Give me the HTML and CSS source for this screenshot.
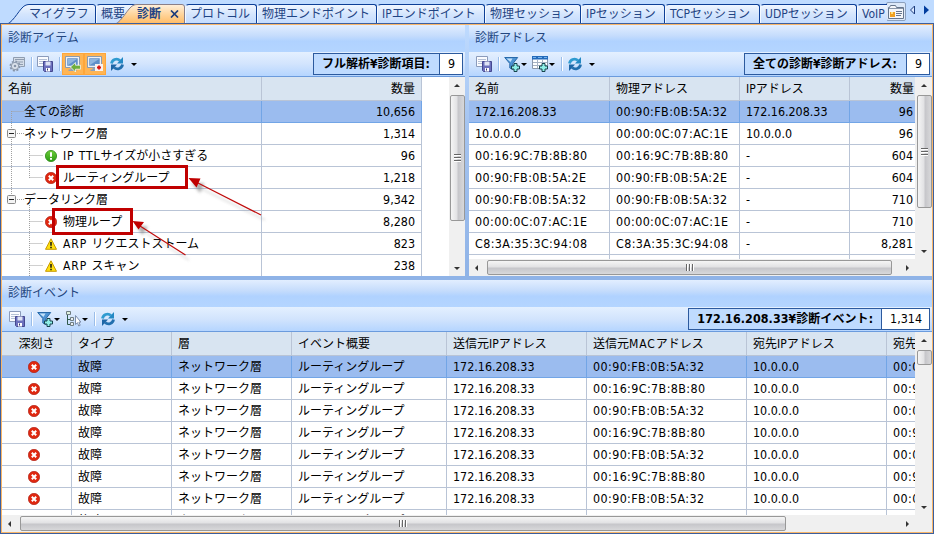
FILE: index.html
```html
<!DOCTYPE html>
<html lang="ja">
  <head>
    <meta charset="UTF-8" />
    <title>診断</title>
    <link rel="stylesheet" href="styles.css">
  </head>
  <body>
    <svg width="0" height="0" class="defs">
      <defs>
        <linearGradient id="tab-fill" x1="0" y1="0" x2="0" y2="1">
          <stop offset="0" stop-color="#f0f6ff" />
          <stop offset="0.5" stop-color="#d4e5fd" />
          <stop offset="1" stop-color="#c2dbff" />
        </linearGradient>
        <linearGradient id="active-fill" x1="0" y1="0" x2="0" y2="1">
          <stop offset="0" stop-color="#fff0dc" />
          <stop offset="0.5" stop-color="#ffd59c" />
          <stop offset="1" stop-color="#ffba62" />
        </linearGradient>
        <linearGradient id="green" x1="0" y1="0" x2="0" y2="1">
          <stop offset="0" stop-color="#6fce3a" />
          <stop offset="1" stop-color="#2a9c12" />
        </linearGradient>
      </defs>
      <symbol id="gear" viewBox="0 0 16 16">
        <path d="M4.500 5V1.500h11v9h-4" fill="#d5dde8" stroke="#8f9db0" />
        <path d="M6 3.500h9M9 6h5M11 8.500h3" stroke="#8f9db0" />
        <circle cx="6" cy="10" r="4.500" fill="#c3ccd8" stroke="#8694a8" stroke-width="2" stroke-dasharray="2 1.500" />
        <circle cx="6" cy="10" r="3.600" fill="#dce3ec" stroke="#8f9db0" />
        <circle cx="6" cy="10" r="1.300" fill="#8694a8" />
      </symbol>
      <symbol id="save" viewBox="0 0 16 16">
        <path d="M.5.5h11v10H.5z" fill="#fbfcff" stroke="#8b9bbb" />
        <path d="M2 3.500h8M2 5.500h5M2 7.500h4" stroke="#b5c1d6" />
        <path d="M6.500 5.500h9v10h-8l-1-1z" fill="#6c70bd" stroke="#45488f" />
        <path d="M8.500 5.500h5v4h-5z" fill="#dfe4f5" />
        <path d="M9 12h4v3.500H9z" fill="#fff" />
        <path d="M10 12.500h1v2h-1z" fill="#34386f" />
      </symbol>
      <symbol id="screen" viewBox="0 0 16 16">
        <path d="M1.500 1.500h12v9h-12z" fill="#5f8fc8" stroke="#eef1f5" stroke-width="1.500" />
        <path d="M.5.5h14v11H.5z" fill="none" stroke="#8c9bb0" />
        <path d="M3 3h9l-9 6z" fill="#8fb5df" />
        <path d="M5.500 12h4v1.500h2v1.500h-8v-1.500h2z" fill="#8fa0b7" />
      </symbol>
      <symbol id="filter" viewBox="0 0 16 16">
        <path d="M.7 1.500h13L9 7.500v6L5.800 12V7.500z" fill="#4e93d3" stroke="#286aaa" />
        <path d="M2.500 2.500h6L6.500 6z" fill="#c4e2fa" />
        <path d="M10 7.500h3v2.500h2.500v3H13v2.500h-3V13H7.500v-3H10z" fill="#8ff0e8" stroke="#17424d" />
      </symbol>
      <symbol id="columns" viewBox="0 0 16 16">
        <path d="M.5.5h15v12H.5z" fill="#fff" stroke="#8b98ac" />
        <path d="M0 0h16v3.500H0z" fill="#246bbb" />
        <path d="M1 1.500h3M6 1.500h4M12 1.500h3" stroke="#77b4ec" />
        <path d="M1 6.500h14M1 9.500h14M5.500 4v8M10.500 4v8" stroke="#a6b2c4" />
        <path d="M10 7.500h3v2.500h2.500v3H13v2.500h-3V13H7.500v-3H10z" fill="#8ff0e8" stroke="#17424d" />
      </symbol>
      <symbol id="tree" viewBox="0 0 16 16">
        <path d="M1.500.5h4v3h-4z" fill="#dff0dd" stroke="#6f7d80" />
        <path d="M2.500 4v9.500H5M2.500 8.500H5" fill="none" stroke="#2f5a4d" />
        <path d="M5.500 6.500h3v3h-3zM5.500 11.500h3v3h-3z" fill="#e9eef3" stroke="#6f7d80" />
        <path d="M10.500 4.500v9l2-1.800 1.200 3.300 1.500-.7-1.300-3.200h2z" fill="#fff" stroke="#7b8dab" />
      </symbol>
      <symbol id="refresh" viewBox="0 0 16 16">
        <path d="M2.500 7.500C3 4 7.500 1.500 11 4.500" fill="none" stroke="#2f9bd0" stroke-width="2.800" />
        <path d="M14 1v6.500H8z" fill="#2489c4" />
        <path d="M13.500 8.500C13 12 8.500 14.500 5 11.500" fill="none" stroke="#226fae" stroke-width="2.800" />
        <path d="M2 15V8.500h6z" fill="#1e66a6" />
      </symbol>
      <symbol id="error" viewBox="0 0 12 12">
        <circle cx="6" cy="6" r="5.700" fill="#e02810" stroke="#a81408" stroke-width=".6" />
        <path d="M3.800 3.800l4.400 4.400M8.200 3.800L3.800 8.200" stroke="#fff" stroke-width="2" />
      </symbol>
      <symbol id="info" viewBox="0 0 12 12">
        <circle cx="6" cy="6" r="5.600" fill="url(#green)" stroke="#2b8a18" stroke-width=".8" />
        <path d="M6 2.300v4.500M6 8v1.800" stroke="#fff" stroke-width="2" />
      </symbol>
      <symbol id="warn" viewBox="0 0 12 12">
        <path d="M6 .8L11.500 11.300H.5z" fill="#ffe010" stroke="#c89a00" stroke-linejoin="round" />
        <path d="M6 4v3.800M6 8.700v1.500" stroke="#111" stroke-width="1.500" />
      </symbol>
    </svg>

    <div class="window">
      <nav class="tabs">
        <a class="tab first">
          <svg width="89" height="20"><path d="M.5 20C7 17 13 4 18 1.500Q20 .5 22 .5H86Q88.500.5 88.500 3V20" fill="url(#tab-fill)" stroke="#0d3f97" /></svg>
          マイグラフ
        </a>
        <a class="tab summary">概要</a>
        <a class="tab active">
          <svg width="70" height="20"><path d="M.5 20C7 17 13 4 18 1.500Q20 .5 22 .5H67Q69.500.5 69.500 3V20" fill="url(#active-fill)" stroke="#8a7f88" /></svg>
          診断
          <svg class="close" width="9" height="8"><path d="M1 .5l7 7M8 .5l-7 7" stroke="#1c3c7c" stroke-width="1.700" /></svg>
        </a>
        <a class="tab w72">プロトコル</a>
        <a class="tab w120">物理エンドポイント</a>
        <a class="tab w108">IPエンドポイント</a>
        <a class="tab w96">物理セッション</a>
        <a class="tab w84">IPセッション</a>
        <a class="tab w95">TCPセッション</a>
        <a class="tab w97">UDPセッション</a>
        <a class="tab voip">VoIP</a>
        <button class="tab-menu">
          <svg width="16" height="14"><path d="M.5 2.500h1l1-2h5l1 2h7v11H.5z" fill="#f4f6f9" stroke="#66768c" /><path d="M1 3.500h14" stroke="#8a97a9" /><path d="M8 6.500h6M8 8.500h6M8 10.500h5" stroke="#66768c" /><path d="M2 7h5v5H2z" fill="#f0a020" /><path d="M3 7h2v2H3z" fill="#ffe07a" /></svg>
        </button>
        <svg class="nav-arrows" width="22" height="10"><path d="M5.500 1v8L1.500 5z" fill="#dceaff" stroke="#1c3c7c" /><path d="M15 .5v9l5-4.500z" fill="#003c9e" /></svg>
      </nav>

      <div class="content">
        <div class="top">
          <section class="pane items">
            <h2>診断アイテム</h2>
            <div class="toolbar">
              <svg class="icon"><use href="#gear" /></svg>
              <i class="sep"></i>
              <svg class="icon"><use href="#save" /></svg>
              <i class="sep"></i>
              <span class="toggle"><svg class="icon" viewBox="0 0 16 16"><use href="#screen" /><path d="M5.500 11l5-4.500v2.700h5v4h-5V16z" fill="#6fae3c" stroke="#fff" stroke-width=".7" /></svg></span>
              <span class="toggle"><svg class="icon" viewBox="0 0 16 16"><use href="#screen" /><path d="M8 8h8v7H8z" fill="#f7f2f0" /><path d="M12 9.500v4M10 11.500h4" stroke="#d81010" stroke-width="1.800" /></svg></span>
              <svg class="icon after-toggle"><use href="#refresh" /></svg>
              <i class="caret far"></i>
              <div class="count"><b>フル解析¥診断項目:</b><span class="num">9</span></div>
            </div>
            <div class="grid-area">
              <div class="table-wrap">
                <table class="items-table">
                  <colgroup><col class="c260"><col class="c160"></colgroup>
                  <thead>
                    <tr><th>名前</th><th class="right">数量</th></tr>
                  </thead>
                  <tbody>
                    <tr class="selected"><td class="l1">全ての診断</td><td class="num right">10,656</td></tr>
                    <tr><td class="l1">ネットワーク層</td><td class="num right">1,314</td></tr>
                    <tr><td class="l2"><svg class="status"><use href="#info" /></svg><span class="latin">IP TTL</span>サイズが小さすぎる</td><td class="num right">96</td></tr>
                    <tr><td class="l2"><svg class="status"><use href="#error" /></svg>ルーティングループ</td><td class="num right">1,218</td></tr>
                    <tr><td class="l1">データリンク層</td><td class="num right">9,342</td></tr>
                    <tr><td class="l2"><svg class="status"><use href="#error" /></svg>物理ループ</td><td class="num right">8,280</td></tr>
                    <tr><td class="l2"><svg class="status"><use href="#warn" /></svg><span class="latin">ARP </span>リクエストストーム</td><td class="num right">823</td></tr>
                    <tr><td class="l2"><svg class="status"><use href="#warn" /></svg><span class="latin">ARP </span>スキャン</td><td class="num right">238</td></tr>
                  </tbody>
                </table>
                <svg class="tree-lines" width="60" height="175">
                  <g fill="none" stroke="#a0a0a0" stroke-dasharray="1 1">
                    <path d="M9.500 10v88M9.500 10.500H22M15 32.500h7M15 98.500h7M27.500 38v39M27.500 54.500H41M27.500 76.500H41M27.500 104v71M27.500 120.500H41M27.500 142.500H41M27.500 164.500H41" />
                  </g>
                  <g fill="#f4f4f4" stroke="#8a8a8a">
                    <rect x="5.500" y="28.500" width="8" height="8" rx="1" />
                    <rect x="5.500" y="94.500" width="8" height="8" rx="1" />
                    <path d="M7 32.500h5M7 98.500h5" stroke="#222" />
                  </g>
                </svg>
              </div>
              <div class="vscroll"><i class="up"></i><div class="thumb t-items"><i></i></div><i class="down"></i></div>
            </div>
          </section>

          <section class="pane addresses">
            <h2>診断アドレス</h2>
            <div class="toolbar">
              <svg class="icon"><use href="#save" /></svg>
              <i class="sep"></i>
              <svg class="icon"><use href="#filter" /></svg>
              <i class="caret"></i>
              <svg class="icon next"><use href="#columns" /></svg>
              <i class="caret"></i>
              <i class="sep"></i>
              <svg class="icon"><use href="#refresh" /></svg>
              <i class="caret far"></i>
              <div class="count"><b>全ての診断¥診断アドレス:</b><span class="num">9</span></div>
            </div>
            <div class="grid-area">
              <div class="table-wrap">
                <table class="addr-table">
                  <colgroup><col class="c141"><col class="c130"><col class="c110"><col class="c65"></colgroup>
                  <thead>
                    <tr><th>名前</th><th>物理アドレス</th><th>IPアドレス</th><th class="right">数量</th></tr>
                  </thead>
                  <tbody class="num">
                    <tr class="selected"><td>172.16.208.33</td><td class="mac">00:90:FB:0B:5A:32</td><td>172.16.208.33</td><td class="right">96</td></tr>
                    <tr><td>10.0.0.0</td><td class="mac">00:00:0C:07:AC:1E</td><td>10.0.0.0</td><td class="right">96</td></tr>
                    <tr><td class="mac">00:16:9C:7B:8B:80</td><td class="mac">00:16:9C:7B:8B:80</td><td>-</td><td class="right">604</td></tr>
                    <tr><td class="mac">00:90:FB:0B:5A:2E</td><td class="mac">00:90:FB:0B:5A:2E</td><td>-</td><td class="right">604</td></tr>
                    <tr><td class="mac">00:90:FB:0B:5A:32</td><td class="mac">00:90:FB:0B:5A:32</td><td>-</td><td class="right">710</td></tr>
                    <tr><td class="mac">00:00:0C:07:AC:1E</td><td class="mac">00:00:0C:07:AC:1E</td><td>-</td><td class="right">710</td></tr>
                    <tr><td class="mac">C8:3A:35:3C:94:08</td><td class="mac">C8:3A:35:3C:94:08</td><td>-</td><td class="right">8,281</td></tr>
                    <tr><td></td><td></td><td></td><td></td></tr>
                  </tbody>
                </table>
              </div>
              <div class="vscroll"><i class="up"></i><div class="thumb t-addr"><i></i></div><i class="down"></i></div>
            </div>
            <div class="hscroll"><i class="prev"></i><div class="thumb h-addr"><i></i></div><i class="next-arrow"></i></div>
          </section>
        </div>

        <section class="pane events">
          <h2>診断イベント</h2>
          <div class="toolbar">
            <svg class="icon"><use href="#save" /></svg>
            <i class="sep"></i>
            <svg class="icon"><use href="#filter" /></svg>
            <i class="caret"></i>
            <svg class="icon next"><use href="#tree" /></svg>
            <i class="caret"></i>
            <i class="sep"></i>
            <svg class="icon"><use href="#refresh" /></svg>
            <i class="caret far"></i>
            <div class="count wide"><b><span class="num">172.16.208.33</span>¥診断イベント:</b><span class="num">1,314</span></div>
          </div>
          <div class="grid-area">
            <div class="table-wrap">
              <table class="event-table">
                <colgroup><col class="c70"><col class="c100"><col class="c120"><col class="c155"><col class="c140"><col class="c160"><col class="c140"><col class="c140"></colgroup>
                <thead>
                  <tr><th class="center">深刻さ</th><th>タイプ</th><th>層</th><th>イベント概要</th><th>送信元IPアドレス</th><th>送信元<span class="latin">MAC</span>アドレス</th><th>宛先IPアドレス</th><th>宛先MACアドレス</th></tr>
                </thead>
                <tbody id="events"></tbody>
              </table>
            </div>
            <div class="vscroll"><i class="up"></i><div class="thumb t-event"></div><i class="down"></i></div>
          </div>
          <div class="hscroll"><i class="prev"></i><div class="thumb h-event"><i></i></div><i class="next-arrow"></i></div>
        </section>
      </div>
    </div>

    <!-- callouts over the loop entries -->
    <svg class="callouts" width="280" height="110">
      <defs>
        <filter id="shadow" x="-20%" y="-20%" width="150%" height="150%"><feGaussianBlur stdDeviation="1.500" /></filter>
      </defs>
      <g transform="translate(4 5)" fill="#777" stroke="#999" opacity=".6" filter="url(#shadow)">
        <path d="M196 23L261 55M142 68L185 95" />
        <path d="M188 18l12 .5-4 9zM132.500 61l11 1-5 7.500z" />
      </g>
      <path d="M57.500 6.500h129v21h-129zM53.500 49.500h78v24h-78z" fill="none" stroke="#c00000" stroke-width="3" />
      <path d="M196 22L261 55M140 66L185.500 95" stroke="#c00c0c" stroke-width="1.200" />
      <path d="M188.500 18l12 .5-4 9zM132.500 61l11.500 1-5.500 7.500z" fill="#c00000" />
    </svg>

    <script>
      const macs = ["00:90:FB:0B:5A:32", "00:16:9C:7B:8B:80"];
      const targets = ["00:00:0C:07:AC:1E", "00:90:FB:0B:5A:2E"];
      const body = document.getElementById("events");

      for (let i = 0; i < 8; i++) {
        const row = document.createElement("tr");
        if (i === 0) row.className = "selected";
        row.innerHTML = `
          <td class="center"><svg class="status"><use href="#error" /></svg></td>
          <td>故障</td>
          <td>ネットワーク層</td>
          <td>ルーティングループ</td>
          <td class="num">172.16.208.33</td>
          <td class="num mac">${macs[i % 2]}</td>
          <td class="num">10.0.0.0</td>
          <td class="num mac">${targets[i % 2]}</td>`;
        body.appendChild(row);
      }
    </script>
  </body>
</html>
```
FILE: styles.css
```css
* {
  box-sizing: border-box;
}
body {
  margin: 0;
  width: 934px;
  height: 534px;
  overflow: hidden;
  position: relative;
  font-family: "DejaVu Sans Condensed", "Noto Sans CJK JP", sans-serif;
  font-size: 12px;
  line-height: 16px;
  color: #000;
}

.defs {
  position: absolute;
}

.window {
  display: flex;
  flex-direction: column;
  height: 534px;
  background: #bfdbff;
}

/* Tabs */
.tabs {
  display: flex;
  height: 24px;
  padding: 4px 0 0 7px;
  border-bottom: 1px solid #3c64a8;
  color: #1f4484;
  overflow: hidden;
}

.tab {
  position: relative;
  flex: none;
  height: 20px;
  padding: 1px 0 0 4px;
  white-space: nowrap;
  border: 1px solid #0d3f97;
  border-left-color: #f4f9ff;
  border-bottom: none;
  border-radius: 4px 3px 0 0;
  background: linear-gradient(#f0f6ff, #d4e5fd 50%, #c2dbff);
}

.tab.first,
.tab.active {
  border: none;
  background: none;
  z-index: 1;
}

.tab.first svg:first-child,
.tab.active svg:first-child {
  position: absolute;
  left: 0;
  top: 0;
  z-index: -1;
}

.tab.first {
  width: 89px;
  padding: 2px 0 0 22px;
}

.tab.summary {
  width: 40px;
}

.tab.active {
  width: 70px;
  margin-left: -21px;
  padding: 2px 0 0 22px;
  font-weight: bold;
}

.close {
  margin-left: 5px;
}

.w72 { width: 72px; }
.w120 { width: 120px; }
.w108 { width: 108px; }
.w96 { width: 96px; }
.w84 { width: 84px; }
.w95 { width: 95px; }
.w97 { width: 97px; }

.tab.voip {
  width: 30px;
  overflow: hidden;
  border-right: none;
  border-top-right-radius: 0;
}

.tab-menu {
  display: flex;
  flex: none;
  align-items: center;
  justify-content: center;
  width: 20px;
  height: 19px;
  margin: -2px 0 0 -1px;
  padding: 0;
  border: 1px solid #8ba0bd;
  border-radius: 2px;
  background: #dde9f8;
}

.nav-arrows {
  flex: none;
  margin: 1px 0 0 3px;
}

/* Panes */
.content {
  flex: 1;
  min-height: 0;
  border: 1px solid #f9b668;
  outline: 1px solid #3c5f9e;
  outline-offset: 0;
  margin: 0 1px 1px;
}

.top {
  display: flex;
  height: 251px;
}

.pane {
  display: flex;
  flex-direction: column;
  overflow: hidden;
  background: #fff;
}

.items {
  width: 463px;
}

.addresses {
  width: 467px;
  border-left: 4px solid;
  border-image: linear-gradient(#bfdbff, #a5c4f0 40%, #8fb3e7) 1;
  border-top: none;
  border-right: none;
  border-bottom: none;
}

.events {
  height: 256px;
  border-top: 4px solid #8fb3e7;
}

.pane h2 {
  flex: none;
  height: 27px;
  margin: 0;
  padding: 5px 6px;
  font-size: 12px;
  font-weight: normal;
  color: #23467f;
  background: linear-gradient(#e2eeff, #c5dcfc 40%, #b0d2ff 60%, #b4d5ff);
}

.toolbar {
  display: flex;
  flex: none;
  align-items: center;
  height: 25px;
  padding: 0 2px 0 7px;
  border-bottom: 1px solid #6b9bdd;
  background: linear-gradient(#e4f0ff, #d2e4fd 50%, #b5d5ff);
}

.icon {
  flex: none;
  width: 16px;
  height: 16px;
}

.sep {
  width: 2px;
  height: 14px;
  margin: 0 4px 0 6px;
  border-left: 1px solid #9abde9;
  border-right: 1px solid #fff;
}

.toggle {
  display: flex;
  align-items: center;
  justify-content: center;
  width: 22px;
  height: 22px;
  border: 1px solid #ffa73a;
  background: #ffb554;
}

.sep + .toggle {
  margin-left: -3px;
}

.after-toggle {
  margin-left: 3px;
}

.caret {
  width: 6px;
  margin-left: 1px;
  border: 3px solid transparent;
  border-top-color: #000;
  border-bottom: none;
}

.caret.far {
  margin-left: 6px;
}

.icon.next {
  margin-left: 5px;
}

.count {
  display: flex;
  height: 22px;
  margin-left: auto;
  border: 1px solid #2c5a9e;
  line-height: 20px;
  background: #bfdbff;
}

.count b {
  padding: 0 9px 0 8px;
}

.count > .num {
  padding: 0 7px 0 8px;
  border-left: 1px solid #2c5a9e;
  background: #fff;
}

.count.wide b {
  padding-right: 8px;
  letter-spacing: 0.08px;
}

/* Tables */
.grid-area {
  display: flex;
  flex: 1;
  min-height: 0;
}

.table-wrap {
  position: relative;
  flex: 1;
  min-width: 0;
  overflow: hidden;
}

table {
  table-layout: fixed;
  border-collapse: separate;
  border-spacing: 0;
}

.items-table { width: 420px; }
.addr-table { width: 446px; }
.event-table { width: 1025px; }

.c260 { width: 260px; }
.c160 { width: 160px; }
.c155 { width: 155px; }
.c141 { width: 141px; }
.c140 { width: 140px; }
.c130 { width: 130px; }
.c120 { width: 120px; }
.c110 { width: 110px; }
.c100 { width: 100px; }
.c70 { width: 70px; }
.c65 { width: 65px; }

th,
td {
  height: 22px;
  padding: 0 6px;
  text-align: left;
  font-weight: normal;
  white-space: nowrap;
  overflow: hidden;
  border-right: 1px solid #b9c4d6;
  border-bottom: 1px solid #b9c4d6;
}

th {
  height: 24px;
  background: #d8e4f1;
}

.num {
  font-size: 12.4px;
}

.mac {
  letter-spacing: 0.4px;
}

.latin {
  letter-spacing: 0.9px;
}

.right {
  text-align: right;
}

.center {
  text-align: center;
}

.addr-table .right,
.addr-table td:last-child {
  padding-right: 2px;
  border-right: none;
}

.addr-table th.right {
  padding-right: 1px;
}

.selected td {
  background: #9bbcef;
  border-color: #72a5e6;
}

td.l1 {
  padding-left: 22px;
}

td.l2 {
  padding-left: 43px;
}

.status {
  width: 12px;
  height: 12px;
  vertical-align: -2px;
}

.l2 .status {
  margin-right: 6px;
}

.center .status {
  display: block;
  margin: 0 auto 0 20px;
}

.tree-lines {
  position: absolute;
  left: 0;
  top: 24px;
}

/* Scrollbars */
.vscroll {
  display: flex;
  flex-direction: column;
  align-items: center;
  flex: none;
  width: 16px;
  background: #f0f0f0;
}

.addresses .vscroll,
.events .vscroll {
  width: 17px;
  padding-left: 1px;
}

.vscroll > i,
.hscroll > i {
  border: 3px solid transparent;
}

.up {
  margin: 7px 0 8px;
  border-top: none !important;
  border-bottom-color: #333 !important;
}

.down {
  margin: auto 0 6px;
  border-bottom: none !important;
  border-top-color: #333 !important;
}

.thumb {
  display: flex;
  align-items: center;
  justify-content: center;
  border: 1px solid #989898;
  border-radius: 2px;
}

.vscroll .thumb {
  width: 15px;
  background: linear-gradient(90deg, #f5f5f5, #e2e2e4 45%, #c6c6ca 55%, #d8d8da);
}

.vscroll .thumb i {
  width: 7px;
  height: 8px;
  background: repeating-linear-gradient(#666 0 1px, #fff 1px 2px, transparent 2px 3px);
}

.t-items { height: 126px; }
.t-addr { height: 113px; }
.t-event { height: 15px; }

.hscroll {
  display: flex;
  align-items: center;
  flex: none;
  height: 17px;
  padding-right: 17px;
  background: #f0f0f0;
}

.hscroll .thumb {
  height: 15px;
  background: linear-gradient(#f5f5f5, #e2e2e4 45%, #c6c6ca 55%, #d8d8da);
}

.hscroll .thumb i {
  width: 8px;
  height: 7px;
  background: repeating-linear-gradient(90deg, #666 0 1px, #fff 1px 2px, transparent 2px 3px);
}

.prev {
  margin: 0 9px 0 6px;
  border-left: none !important;
  border-right-color: #333 !important;
}

.next-arrow {
  margin: 0 6px 0 auto;
  border-right: none !important;
  border-left-color: #333 !important;
}

.h-addr { width: 405px; }
.h-event { width: 766px; }

.callouts {
  position: absolute;
  left: 0;
  top: 160px;
}
```
